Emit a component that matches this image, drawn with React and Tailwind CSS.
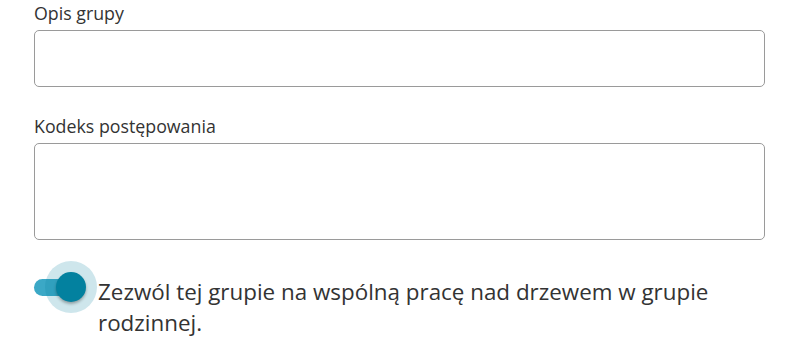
export default function App() {
  return (
    <div className="min-h-screen bg-white px-[34px] font-['Open_Sans',sans-serif] text-[#333]">
      {/* Opis grupy */}
      <label className="block text-[17.8px] leading-[26px]">Opis grupy</label>
      <div className="mt-[4px] h-[57px] w-[731px] rounded-[5px] border border-[#9a9a9a]"></div>

      {/* Kodeks postępowania */}
      <label className="mt-[26px] block text-[17.8px] leading-[26px]">Kodeks postępowania</label>
      <div className="mt-[4px] h-[97px] w-[731px] rounded-[5px] border border-[#9a9a9a]"></div>

      {/* Toggle */}
      <div className="mt-[21px] flex items-start gap-[1px]">
        <div className="relative flex h-[52px] w-[63px] shrink-0 items-center">
          <div className="h-[17px] w-[50px] rounded-full bg-[#3ba8c6]"></div>
          <div className="absolute left-[11px] top-0 flex h-[52px] w-[52px] items-center justify-center rounded-full bg-[#0a819f]/20">
            <div className="h-[30px] w-[30px] rounded-full bg-[#03819f] shadow-[0_2px_3px_rgba(0,0,0,0.3)]"></div>
          </div>
        </div>
        <p className="pt-[15px] text-[22.4px] leading-[31px]">
          Zezwól tej grupie na wspólną pracę nad drzewem w grupie rodzinnej.
        </p>
      </div>
    </div>
  );
}
